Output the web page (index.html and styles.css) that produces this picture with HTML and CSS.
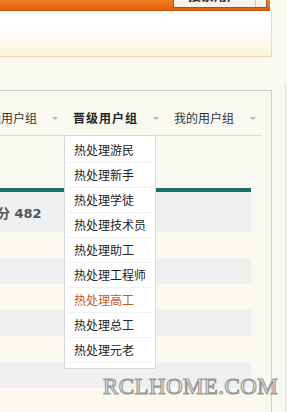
FILE: index.html
```html
<!DOCTYPE html>
<html lang="zh">
<head>
<meta charset="utf-8">
<title>用户组</title>
<link rel="stylesheet" href="styles.css">
</head>
<body>
<div class="layout">
  <div class="main">
    <header class="topbar">
      <div class="topbar-btn">
        <span class="btn-label">搜索用户</span>
        <span class="btn-split"></span>
      </div>
    </header>
    <div class="banner"></div>
    <section class="box">
      <nav class="tabs">
        <div class="tab"><span class="tab-text">普通用户组</span><span class="arrow"></span></div>
        <div class="tab active"><span class="tab-text">晋级用户组</span><span class="arrow"></span>
          <ul class="dropdown">
            <li>热处理游民</li>
            <li>热处理新手</li>
            <li>热处理学徒</li>
            <li>热处理技术员</li>
            <li>热处理助工</li>
            <li>热处理工程师</li>
            <li class="current">热处理高工</li>
            <li>热处理总工</li>
            <li>热处理元老</li>
          </ul>
        </div>
        <div class="tab"><span class="tab-text">我的用户组</span><span class="arrow"></span></div>
      </nav>
      <table class="list">
        <tr class="row-head"><td>积分 482</td></tr>
        <tr class="row-a"><td></td></tr>
        <tr class="row-b"><td></td></tr>
        <tr class="row-a"><td></td></tr>
        <tr class="row-b"><td></td></tr>
        <tr class="row-a"><td></td></tr>
        <tr class="row-b"><td></td></tr>
        <tr class="row-a"><td></td></tr>
      </table>
    </section>
  </div>
  <aside class="side"></aside>
</div>
<div class="watermark">RCLHOME.COM</div>
</body>
</html>
```

FILE: styles.css
```css
html, body {
  margin: 0;
  padding: 0;
}
body {
  width: 287px;
  height: 412px;
  overflow: hidden;
  background: #faf9f1;
  font-family: "Noto Sans CJK SC", "Noto Sans", sans-serif;
  font-size: 12px;
  color: #222;
  position: relative;
}
.layout {
  display: flex;
  align-items: flex-start;
}
.main {
  width: 312px;
  margin-left: -40px;
  flex: none;
}
.side {
  flex: none;
  width: 2px;
  height: 340px;
  margin-left: 13px;
  margin-top: 83px;
  border-left: 1px solid #e4e2da;
}

/* top orange bar */
.topbar {
  height: 10px;
  margin-right: 2px;
  background: linear-gradient(#f4801c, #e2600c);
  border-bottom: 1px solid #c4520f;
  display: flex;
  justify-content: flex-end;
  align-items: flex-start;
}
.topbar-btn {
  display: flex;
  height: 19px;
  margin-top: -13px;
  margin-right: 3px;
  border: 1px solid #8e5b3a;
  background: linear-gradient(#ffffff, #f6f1e8);
}
.btn-label {
  width: 67px;
  padding-left: 14px;
  margin-top: 0;
  font-weight: bold;
  font-size: 13px;
  line-height: 13px;
  color: #3a2a20;
}
.btn-split {
  width: 10px;
  border-left: 1px solid #cfc6bb;
}

/* panel under bar */
.banner {
  height: 45px;
  border-right: 1px solid #efdcae;
  border-bottom: 1px solid #efdcae;
  background: linear-gradient(#ffffff 25%, #fcf4df);
  margin-bottom: 33px;
}

/* main box */
.box {
  border-top: 1px solid #cfcfcf;
  border-right: 1px solid #cfcfcf;
  height: 330px;
}
.tabs {
  display: flex;
  align-items: flex-end;
  gap: 15px;
  height: 44px;
  padding-left: 17px;
  margin-right: 9px;
  border-bottom: 1px solid #dcdcdc;
}
.tab {
  display: flex;
  align-items: center;
  gap: 15px;
  height: 44px;
  box-sizing: border-box;
}
.tab-text {
  line-height: 13px;
  margin-top: 9px;
  color: #333;
}
.tab.active {
  position: relative;
}
.tab.active .tab-text {
  font-weight: bold;
  letter-spacing: 1px;
  color: #222;
}
.tab:last-child {
  gap: 16px;
}
.arrow {
  width: 0;
  height: 0;
  margin-top: 11px;
  border-top: 3px solid #b5b5b5;
  border-left: 3px solid transparent;
  border-right: 3px solid transparent;
}

/* dropdown */
.dropdown {
  position: absolute;
  left: -9px;
  top: 100%;
  width: 90px;
  margin: 0;
  padding: 2px 0 5px;
  list-style: none;
  background: #fff;
  border: 1px solid #d6d6d6;
  z-index: 2;
}
.dropdown li {
  margin: 0 3px;
  padding-left: 6px;
  height: 24px;
  line-height: 24px;
  border-bottom: 1px solid #f1f1f1;
  color: #222;
  white-space: nowrap;
}
.dropdown li.current {
  color: #c4582a;
}

/* table */
.list {
  width: 291px;
  margin-top: 52px;
  border-collapse: collapse;
  border-top: 4px solid #1b6f6d;
}
.list td {
  padding: 0;
  height: 26px;
}
.row-head td {
  height: 40px;
  background: #efeff0;
  padding-left: 24px;
  font-family: "DejaVu Sans", "Noto Sans CJK SC", sans-serif;
  font-weight: bold;
  font-size: 13px;
  color: #555;
}
.row-a td {
  background: #fbf9ef;
}
.row-b td {
  background: #efeff0;
}

/* watermark overlay */
.watermark {
  position: absolute;
  left: 103px;
  top: 375px;
  font-family: "Liberation Serif", serif;
  font-size: 23px;
  line-height: 23px;
  letter-spacing: 0.4px;
  color: #f3f3f3;
  -webkit-text-stroke: 1.2px #999;
  z-index: 3;
}
```
